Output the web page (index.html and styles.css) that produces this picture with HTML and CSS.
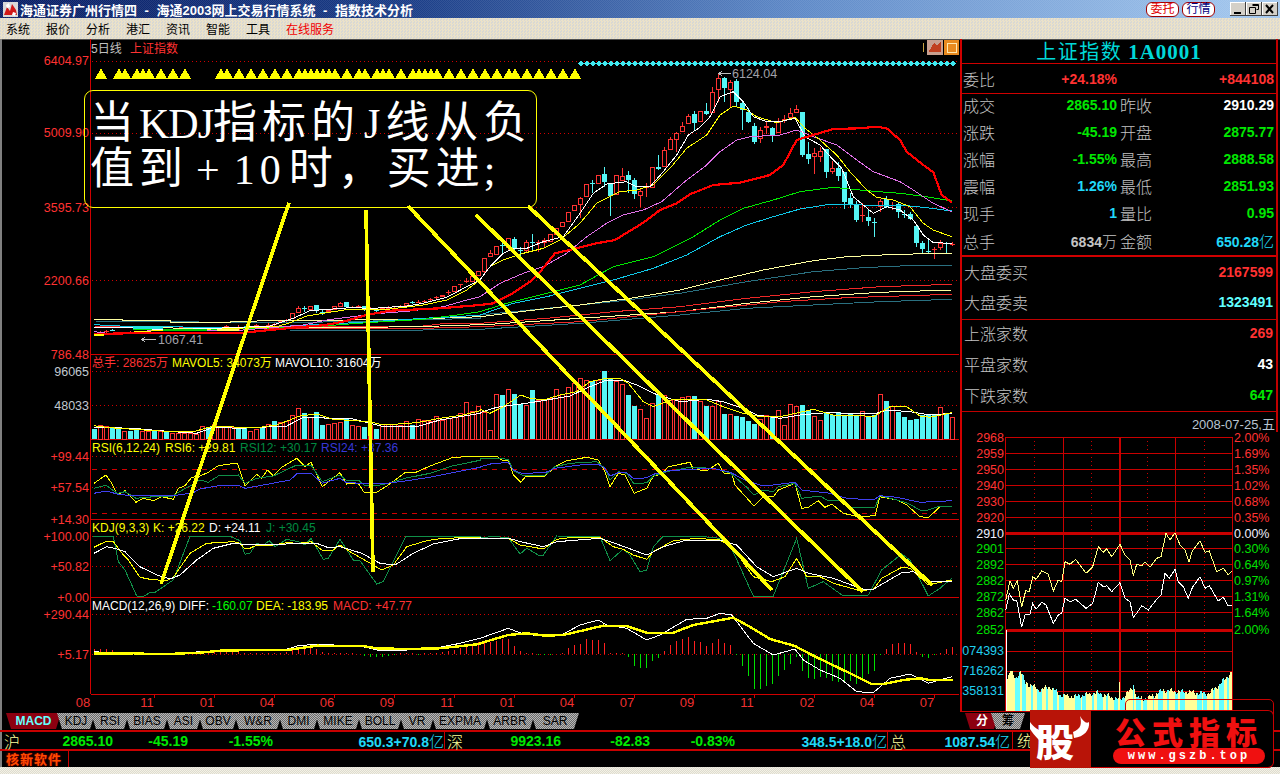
FILE: index.html
```html
<!DOCTYPE html>
<html lang="zh-CN">
<head>
    <meta charset="UTF-8">
    <meta name="viewport" content="width=device-width, initial-scale=1.0">
    <title>海通2003网上交易行情系统 - 指数技术分析</title>
    <link rel="stylesheet" href="styles.css">
</head>
<body>
<div class="window">
    <div class="titlebar">
        <svg class="app-icon" width="15" height="15" viewBox="0 0 15 15">
            <rect width="15" height="15" fill="#d8d8d8"/>
            <path d="M1 13 L4 5 L7 9 L9 2 L13 8 L14 13Z" fill="#d01818"/>
            <path d="M3 3 L6 1 L7 5 L4 6Z M10 10 L13 11 L12 14 L9 13Z" fill="#fff"/>
        </svg>
        <span class="app-title">海通证券广州行情四 - 海通2003网上交易行情系统 - 指数技术分析</span>
        <span class="pill pill-red">委托</span>
        <span class="pill pill-blue">行情</span>
        <div class="caption-btns">
            <span class="caption-btn"><svg width="16" height="14" viewBox="0 0 16 14"><rect x="4" y="10" width="7" height="2" fill="#000"/></svg></span>
            <span class="caption-btn"><svg width="16" height="14" viewBox="0 0 16 14"><path d="M6.5 2.5h6v5h-2M3.5 5.5h6v6h-6z M6.5 3.5h6" fill="none" stroke="#000"/></svg></span>
            <span class="caption-btn"><svg width="16" height="14" viewBox="0 0 16 14"><path d="M4 3l7 8M11 3l-7 8" stroke="#000" stroke-width="2"/></svg></span>
        </div>
    </div>

    <div class="menubar">
        <span>系统</span><span>报价</span><span>分析</span><span>港汇</span><span>资讯</span><span>智能</span><span>工具</span><span class="menu-red">在线服务</span>
    </div>

    <div class="workspace">
        <div class="chart-col">
            <svg class="chart" width="960" height="673" viewBox="0 39 960 673">
                <g id="grid" class="grid">
                    <path class="dot" d="M92 61.5H958M92 133.5H958M92 207.5H958M92 280.5H958"/>
                    <path class="dot" d="M92 371.5H958M92 405.5H958"/>
                    <path class="dot" d="M92 456.5H958M92 487.5H958"/>
                    <path class="dash" d="M92 469.5H958M92 513.5H958"/>
                    <path class="dot" d="M92 536.5H958M92 566.5H958"/>
                    <path class="dot" d="M92 614.5H958M92 654.5H958"/>
                    <path class="solid" d="M90.5 39V694M90.5 354.5H959M90.5 439.5H959M90.5 519.5H959M90.5 597.5H959M90.5 694.5H959"/>
                    <path class="solid" d="M154.5 694V698M214.5 694V698M274.5 694V698M334.5 694V698M394.5 694V698M454.5 694V698M514.5 694V698M574.5 694V698M634.5 694V698M694.5 694V698M754.5 694V698M814.5 694V698M874.5 694V698M934.5 694V698"/>
                </g>
                <g id="signals"></g>
                <g id="candles"></g>
                <g id="volumes"></g>
                <g id="hist"></g>
                <g id="lines"></g>

                <g class="axis">
                    <text x="89" y="65">6404.97</text>
                    <text x="89" y="137">5009.90</text>
                    <text x="89" y="212">3595.73</text>
                    <text x="89" y="285">2200.66</text>
                    <text x="89" y="359">786.48</text>
                    <text x="89" y="376" class="ax-grey">96065</text>
                    <text x="89" y="410" class="ax-grey">48033</text>
                    <text x="89" y="461">+99.44</text>
                    <text x="89" y="492">+57.54</text>
                    <text x="89" y="524">+14.30</text>
                    <text x="89" y="541">+100.00</text>
                    <text x="89" y="571">+50.82</text>
                    <text x="89" y="602">+0.00</text>
                    <text x="89" y="619">+290.44</text>
                    <text x="89" y="659">+5.17</text>
                </g>
                <g class="months">
                    <text x="83" y="707">08</text><text x="147" y="707">11</text><text x="207" y="707">01</text>
                    <text x="267" y="707">04</text><text x="327" y="707">06</text><text x="387" y="707">09</text>
                    <text x="447" y="707">11</text><text x="507" y="707">01</text><text x="567" y="707">04</text>
                    <text x="627" y="707">07</text><text x="687" y="707">09</text><text x="747" y="707">11</text>
                    <text x="807" y="707">02</text><text x="867" y="707">04</text><text x="927" y="707">07</text>
                </g>

                <g class="legend">
                    <text x="91" y="53" class="c-grey">5日线</text>
                    <text x="130" y="53" class="c-red">上证指数</text>
                    <text x="92" y="367" class="c-red">总手: 28625万</text>
                    <text x="172" y="367" class="c-yellow">MAVOL5: 34073万</text>
                    <text x="275" y="367" class="c-white">MAVOL10: 31604万</text>
                    <text x="92" y="452" class="c-yellow">RSI(6,12,24)</text>
                    <text x="165" y="452" class="c-yellow">RSI6: +29.81</text>
                    <text x="240" y="452" class="c-dgreen">RSI12: +30.17</text>
                    <text x="321" y="452" class="c-blue">RSI24: +37.36</text>
                    <text x="92" y="532" class="c-yellow">KDJ(9,3,3)</text>
                    <text x="153" y="532" class="c-yellow">K: +26.22</text>
                    <text x="209" y="532" class="c-white">D: +24.11</text>
                    <text x="266" y="532" class="c-dgreen">J: +30.45</text>
                    <text x="92" y="610" class="c-white">MACD(12,26,9)</text>
                    <text x="179" y="610" class="c-white">DIFF:</text>
                    <text x="212" y="610" class="c-green">-160.07</text>
                    <text x="256" y="610" class="c-yellow">DEA: -183.95</text>
                    <text x="333" y="610" class="c-red">MACD: +47.77</text>
                    <text x="732" y="78" class="c-grey2 big">6124.04</text>
                    <text x="158" y="344" class="c-grey2 big">1067.41</text>
                </g>
                <path class="arrow" d="M731 73.5H719M722 71l-3 2.500 3 2.500M156 339.5H142M145 337l-3 2.500 3 2.500"/>

                <g class="pen">
                    <line x1="289" y1="203" x2="161" y2="584"/>
                    <line x1="366" y1="210" x2="373" y2="572"/>
                    <line x1="408" y1="206" x2="772" y2="590"/>
                    <line x1="476" y1="215" x2="863" y2="592"/>
                    <line x1="528" y1="206" x2="932" y2="585"/>
                </g>

                <rect x="923" y="43" width="1" height="9" fill="#c8a040"/>
                <rect x="927" y="40" width="16" height="15" fill="#c8a090"/>
                <path d="M929 51l5-8 3 3 4-5v11h-12z" fill="#c04020"/>
                <rect x="944" y="40" width="15" height="15" fill="#e88a20"/>
                <rect x="947" y="43" width="9" height="9" fill="#e88a20" stroke="#ffe8b0"/>
            </svg>

            <div class="note">
                <div class="note-line">当<span class="hw">KDJ</span>指标的<span class="hw hw-j">J</span>线从负</div>
                <div class="note-line">值到<span class="hw hw-plus">+</span><span class="hw hw-num">10</span>时，买进<span class="hw hw-semi">;</span></div>
            </div>
        </div>

        <aside class="side">
            <div class="side-inner">
                <div class="quote-title"><span>上证指数</span> <b>1A0001</b></div>
                <div class="q-row q-first">
                    <span class="lbl">委比</span><span class="num up">+24.18%</span><span></span><span class="num up">+844108</span>
                </div>
                <div class="q-block">
                    <div class="q-row"><span class="lbl">成交</span><span class="num down">2865.10</span><span class="lbl lbl2">昨收</span><span class="num white">2910.29</span></div>
                    <div class="q-row"><span class="lbl">涨跌</span><span class="num down">-45.19</span><span class="lbl lbl2">开盘</span><span class="num down">2875.77</span></div>
                    <div class="q-row"><span class="lbl">涨幅</span><span class="num down">-1.55%</span><span class="lbl lbl2">最高</span><span class="num down">2888.58</span></div>
                    <div class="q-row"><span class="lbl">震幅</span><span class="num cyan">1.26%</span><span class="lbl lbl2">最低</span><span class="num down">2851.93</span></div>
                    <div class="q-row"><span class="lbl">现手</span><span class="num cyan">1</span><span class="lbl lbl2">量比</span><span class="num down">0.95</span></div>
                    <div class="q-row"><span class="lbl">总手</span><span class="num grey">6834<i>万</i></span><span class="lbl lbl2">金额</span><span class="num cyan">650.28<i>亿</i></span></div>
                </div>
                <div class="m-block m-orders">
                    <div class="m-row"><span class="lbl">大盘委买</span><span class="num up">2167599</span></div>
                    <div class="m-row"><span class="lbl">大盘委卖</span><span class="num cyan2">1323491</span></div>
                </div>
                <div class="m-block m-counts">
                    <div class="m-row"><span class="lbl">上涨家数</span><span class="num up">269</span></div>
                    <div class="m-row"><span class="lbl">平盘家数</span><span class="num white">43</span></div>
                    <div class="m-row"><span class="lbl">下跌家数</span><span class="num down">647</span></div>
                </div>
                <div class="date-row">2008-07-25,五</div>
            </div>
            <svg class="mini" width="318" height="280" viewBox="962 432 318 280">
                <g id="mini-grid"></g>
                <g id="mini-bars"></g>
                <g id="mini-lines"></g>
                <g class="axis">
                    <text x="1004" y="442">2968</text><text x="1004" y="458">2959</text><text x="1004" y="474">2950</text>
                    <text x="1004" y="490">2940</text><text x="1004" y="506">2930</text><text x="1004" y="522">2920</text>
                    <text x="1004" y="538" class="ax-white">2910</text>
                    <text x="1004" y="553" class="ax-green">2901</text><text x="1004" y="569" class="ax-green">2892</text><text x="1004" y="585" class="ax-green">2882</text>
                    <text x="1004" y="601" class="ax-green">2872</text><text x="1004" y="617" class="ax-green">2862</text><text x="1004" y="634" class="ax-green">2852</text>
                    <text x="1004" y="655" class="ax-cyan">074393</text><text x="1004" y="675" class="ax-cyan">716262</text><text x="1004" y="695" class="ax-cyan">358131</text>
                </g>
                <g class="axis axis-r">
                    <text x="1234" y="442">2.00%</text><text x="1234" y="458">1.69%</text><text x="1234" y="474">1.35%</text>
                    <text x="1234" y="490">1.02%</text><text x="1234" y="506">0.68%</text><text x="1234" y="522">0.35%</text>
                    <text x="1234" y="538" class="ax-white">0.00%</text>
                    <text x="1234" y="553" class="ax-green">0.30%</text><text x="1234" y="569" class="ax-green">0.64%</text><text x="1234" y="585" class="ax-green">0.97%</text>
                    <text x="1234" y="601" class="ax-green">1.31%</text><text x="1234" y="617" class="ax-green">1.64%</text><text x="1234" y="634" class="ax-green">2.00%</text>
                </g>
            </svg>
        </aside>
    </div>

    <div class="tabs">
        <span class="tab tab-on w55">MACD</span>
        <span class="tab w38">KDJ</span>
        <span class="tab w38">RSI</span>
        <span class="tab w44">BIAS</span>
        <span class="tab w37">ASI</span>
        <span class="tab w40">OBV</span>
        <span class="tab w48">W&amp;R</span>
        <span class="tab w41">DMI</span>
        <span class="tab w46">MIKE</span>
        <span class="tab w46">BOLL</span>
        <span class="tab w36">VR</span>
        <span class="tab w58">EXPMA</span>
        <span class="tab w50">ARBR</span>
        <span class="tab w48">SAR</span>
        <span class="side-tabs">
            <span class="tab tab-on2 w34">分</span>
            <span class="tab tab-off2 w34">筹</span>
        </span>
    </div>

    <div class="status">
        <div class="st-group st-a">
            <span class="st-lbl">沪</span><span class="st-num down">2865.10</span><span class="st-num down">-45.19</span><span class="st-num down">-1.55%</span><span class="st-num cyan">650.3+70.8<i>亿</i></span>
        </div>
        <div class="st-group st-b">
            <span class="st-lbl">深</span><span class="st-num down">9923.16</span><span class="st-num down">-82.83</span><span class="st-num down">-0.83%</span><span class="st-num cyan">348.5+18.0<i>亿</i></span>
        </div>
        <div class="st-group st-c">
            <span class="st-lbl">总</span><span class="st-num cyan">1087.54<i>亿</i></span>
        </div>
        <div class="st-group st-d"><span class="st-lbl">统</span></div>
    </div>

    <div class="footer"><span class="core-soft">核新软件</span></div>
    <div class="win-edge"></div>

    <div class="logo-back"></div>
    <div class="logo">
        <div class="logo-bull">
            <svg class="horns" width="61" height="58" viewBox="0 0 61 58">
                <path d="M0 12C4 18 9 20 13 22L9 30C5 26 2 22 0 19Z" fill="#fff"/>
                <path d="M50 6C52 14 51 19 43 22L44 28C54 27 60 20 59 12C56 14 53 11 50 6Z" fill="#fff"/>
            </svg>
            <span class="bull-char">股</span>
        </div>
        <div class="logo-body">
            <div class="logo-name">公式指标</div>
            <div class="logo-url">www.gszb.top</div>
        </div>
    </div>
</div>
<script src="chart.js"></script>
</body>
</html>
```

FILE: styles.css
```css
* {
    box-sizing: border-box;
}

html, body {
    margin: 0;
    padding: 0;
    background: #000;
}

body {
    font-family: "Liberation Sans", "Noto Sans CJK SC", sans-serif;
}

i {
    font-style: normal;
}

.window {
    position: relative;
    width: 1280px;
    height: 774px;
    overflow: hidden;
    background: #000;
}

/* title + menu */
.titlebar {
    display: flex;
    align-items: center;
    height: 18px;
    padding-left: 3px;
    color: #fff;
    background:
        repeating-conic-gradient(rgba(255, 255, 255, 0.08) 0 25%, transparent 0 50%) 0 0 / 2px 2px,
        linear-gradient(90deg, #0a1f66 0, #1a3c86 400px, #5f8ac8 800px, #a6caf0 1280px);
}

.app-icon {
    flex: none;
}

.app-title {
    margin-left: 2px;
    flex: 1;
    font-size: 13px;
    font-weight: 700;
    white-space: pre;
    word-spacing: 4px;
}

.pill {
    width: 33px;
    height: 15px;
    margin-right: 3px;
    border: 1px solid #a00000;
    border-radius: 6px;
    background: #fff;
    font-size: 12px;
    line-height: 13px;
    text-align: center;
}

.pill-red {
    color: #e00000;
}

.pill-blue {
    color: #000080;
}

.caption-btns {
    display: flex;
    margin-left: 12px;
    margin-right: 2px;
}

.caption-btn {
    display: block;
    width: 16px;
    height: 14px;
    background: #d4d0c8;
    box-shadow: inset -1px -1px #404040, inset 1px 1px #fff;
}

.menubar {
    display: flex;
    align-items: center;
    gap: 16px;
    height: 21px;
    padding-left: 6px;
    font-size: 12px;
    color: #000;
    background: repeating-conic-gradient(#ece2c8 0 25%, #d8d8d4 0 50%) 0 0 / 3px 3px;
}

.menu-red {
    color: #f00000;
}

/* main area */
.workspace {
    display: flex;
    height: 673px;
    background: #000;
    box-shadow: inset 2px 0 #808080, inset 0 1px #505050;
}

.chart-col {
    position: relative;
    width: 960px;
    flex: none;
}

.chart {
    display: block;
    shape-rendering: crispEdges;
}

.grid path {
    fill: none;
    stroke: #d00000;
}

.grid .dot {
    stroke-dasharray: 1 3;
}

.grid .dash {
    stroke-dasharray: 5 5;
}

.axis text {
    font-family: "Liberation Sans", sans-serif;
    font-size: 12.5px;
    fill: #ff3232;
    text-anchor: end;
}

.axis-r text {
    text-anchor: start;
}

.axis .ax-grey {
    fill: #c0c8d0;
}

.axis .ax-white {
    fill: #f0f0ff;
}

.axis .ax-green {
    fill: #00e000;
}

.axis .ax-cyan {
    fill: #20d0f0;
}

.months text {
    font-family: "Liberation Sans", sans-serif;
    font-size: 13px;
    fill: #f03030;
    text-anchor: middle;
}

.legend text {
    font-family: "Liberation Sans", "Noto Sans CJK SC", sans-serif;
    font-size: 12px;
}

.legend .big {
    font-size: 12.5px;
}

.c-grey { fill: #c0c0c0; }
.c-grey2 { fill: #a0a0a8; }
.c-red { fill: #ff3232; }
.c-yellow { fill: #ffff00; }
.c-white { fill: #fff; }
.c-green { fill: #00ff00; }
.c-dgreen { fill: #008a40; }
.c-blue { fill: #3838d8; }

.arrow {
    fill: none;
    stroke: #c0c0c0;
}

.pen line {
    stroke: #ffff00;
    stroke-width: 3.7;
}

/* chart lines */
.ln { fill: none; stroke-width: 1; }
.ln-white { stroke: #fff; }
.ln-yellow { stroke: #ffff00; }
.ln-pink { stroke: #e070e8; }
.ln-red { stroke: #ff0000; stroke-width: 2.2; }
.ln-green { stroke: #00e800; }
.ln-cyan { stroke: #10c8e8; }
.ln-cream { stroke: #ffffa0; }
.ln-teal { stroke: #2a7080; }
.ln-thinred { stroke: #f02828; }
.ln-dgreen { stroke: #109048; }
.ln-blue { stroke: #4040f0; }
.ln-fat { stroke: #ffff00; stroke-width: 2.4; }
.ln-pale { stroke: #ffff80; }

.bar-up { fill: #000; stroke: #ff3232; }
.bar-down { fill: #55f5f5; }
.wick-up { stroke: #ff3232; }
.wick-down { stroke: #55f5f5; }

/* annotation box */
.note {
    position: absolute;
    left: 84px;
    top: 51px;
    width: 453px;
    height: 118px;
    padding: 5px 0 0 5px;
    border: 1px solid #ffff00;
    border-radius: 9px;
    color: #fff;
    font-family: "Noto Sans CJK SC", sans-serif;
    font-size: 44px;
    line-height: 46px;
    letter-spacing: 5px;
    white-space: nowrap;
}

.note-line {
    height: 46px;
}

.hw {
    font-family: "Liberation Serif", serif;
    font-size: 42px;
    letter-spacing: -1px;
}

.hw-j {
    margin: 0 6px 0 4px;
}

.hw-plus {
    margin: 0 15px 0 8px;
}

.hw-num {
    margin-right: 3px;
    letter-spacing: 5px;
}

.hw-semi {
    margin-left: -1px;
}

/* right side panel */
.side {
    width: 320px;
    flex: none;
    border-left: 2px solid #d00000;
    box-shadow: inset 0 1px #505050;
}

.side-inner {
    width: 316px;
    border-right: 2px solid #c00000;
}

.mini {
    display: block;
    shape-rendering: crispEdges;
}

.quote-title {
    height: 25px;
    border-bottom: 1px solid #d00000;
    color: #00d8d8;
    font-family: "Noto Sans CJK SC", sans-serif;
    font-size: 20px;
    line-height: 24px;
    letter-spacing: 1.500px;
    text-align: center;
    white-space: nowrap;
}

.quote-title b {
    font-family: "Liberation Serif", serif;
    font-size: 21px;
    letter-spacing: 1px;
}

.q-row {
    display: grid;
    grid-template-columns: 40px 114px 39px 118px;
    align-items: center;
    height: 27.2px;
    padding-left: 1px;
}

.q-first {
    height: 30px;
    border-bottom: 1px solid #d00000;
}

.q-block {
    display: flow-root;
    height: 163px;
    border-bottom: 2px solid #d00000;
}

.q-block .q-row:first-child {
    margin-top: -3px;
}

.lbl {
    color: #c4c4c4;
    font-family: "Noto Sans CJK SC", sans-serif;
    font-size: 16px;
    font-weight: 300;
    line-height: 20px;
    white-space: nowrap;
}

.lbl2 {
    padding-left: 3px;
}

.num {
    font-size: 14px;
    font-weight: 700;
    text-align: right;
    white-space: nowrap;
}

.num i, .st-num i {
    font-family: "Noto Sans CJK SC", sans-serif;
    font-weight: 300;
    font-size: 15px;
}

.up { color: #ff3232; }
.down { color: #00e800; }
.white { color: #fff; }
.cyan { color: #20d8f8; }
.cyan2 { color: #60ffff; }
.grey { color: #c4c4c4; }

.m-block {
    display: flow-root;
    padding: 0 3px 0 2px;
    border-bottom: 1px solid #c00000;
}

.m-orders {
    height: 63px;
}

.m-counts {
    height: 92px;
}

.m-row {
    display: flex;
    justify-content: space-between;
    align-items: center;
    height: 30px;
}

.m-counts .m-row {
    height: 31px;
}

.m-counts .m-row:first-child {
    margin-top: -3px;
}

.date-row {
    height: 20px;
    padding-right: 1px;
    color: #b8c4d0;
    font-size: 13px;
    line-height: 26px;
    text-align: right;
}

/* bottom rows */
.tabs {
    display: flex;
    height: 18px;
    padding: 1px 0 1px 6px;
    box-shadow: inset 2px 0 #808080;
}

.tab {
    display: block;
    margin-right: -4px;
    clip-path: polygon(0 0, 100% 0, calc(100% - 5px) 100%, 5px 100%);
    background: repeating-conic-gradient(#6c6c6c 0 25%, #b8b8b8 0 50%) 0 0 / 2px 2px;
    color: #000;
    font-size: 12px;
    line-height: 16px;
    text-align: center;
}

.tab-on {
    background: #8c0010;
    color: #66ffff;
    font-weight: 700;
}

.tab-on2 {
    background: #8c0010;
    color: #fff;
    font-weight: 700;
}

.tab-off2 {
    font-weight: 700;
}

.w34 { width: 34px; }
.w36 { width: 36px; }
.w37 { width: 37px; }
.w38 { width: 38px; }
.w40 { width: 40px; }
.w41 { width: 41px; }
.w44 { width: 44px; }
.w46 { width: 46px; }
.w48 { width: 48px; }
.w50 { width: 50px; }
.w55 { width: 55px; }
.w58 { width: 58px; }

.side-tabs {
    display: flex;
    position: absolute;
    left: 965px;
}

.side-tabs .tab {
    margin-right: -8px;
}

.status {
    display: flex;
    height: 21px;
    border-top: 2px solid #c80000;
    border-bottom: 2px solid #c80000;
    box-shadow: inset 2px 0 #808080;
}

.st-group {
    display: grid;
    align-items: center;
    flex: none;
    border-right: 1px solid #c80000;
}

.st-a {
    width: 443px;
    margin-left: 2px;
    grid-template-columns: 18px 93px 75px 85px 171px;
}

.st-b {
    width: 443px;
    grid-template-columns: 20px 96px 89px 85px 152px;
}

.st-c {
    width: 125px;
    grid-template-columns: 20px 102px;
}

.st-d {
    width: 60px;
    border-right: 0;
    padding-left: 2px;
}

.st-lbl {
    padding-left: 2px;
    color: #ffff99;
    font-family: "Noto Sans CJK SC", sans-serif;
    font-size: 16px;
    font-weight: 300;
    line-height: 17px;
}

.st-num {
    font-size: 14px;
    font-weight: 700;
    line-height: 17px;
    text-align: right;
    white-space: nowrap;
}

.footer {
    height: 16px;
    padding-left: 6px;
    box-shadow: inset 2px 0 #808080;
}

.core-soft {
    display: block;
    width: 63px;
    height: 16px;
    border-right: 1px solid #c80000;
    color: #ff4a00;
    font-family: "Noto Sans CJK SC", sans-serif;
    font-size: 13px;
    font-weight: 700;
    line-height: 15px;
    letter-spacing: 1px;
    text-shadow: 0 0 2px #c00000;
}

.win-edge {
    height: 7px;
    background: repeating-conic-gradient(#f4f0e4 0 25%, #dcdcd0 0 50%) 0 0 / 2px 2px;
}

/* logo stamped over the corner */
.logo-back {
    position: absolute;
    left: 1125px;
    top: 699px;
    width: 149px;
    height: 20px;
    border: 1px solid #c80000;
    border-radius: 5px;
}

.logo {
    position: absolute;
    left: 1030px;
    top: 710px;
    display: flex;
    width: 244px;
    height: 58px;
}

.logo-bull {
    position: relative;
    width: 61px;
    flex: none;
    background: #b81408;
}

.horns {
    position: absolute;
    left: 0;
    top: 0;
}

.bull-char {
    position: absolute;
    left: 6px;
    top: 1px;
    color: #fff;
    font-family: "Noto Sans CJK SC", sans-serif;
    font-size: 38px;
    font-weight: 900;
    line-height: 58px;
}

.logo-body {
    flex: 1;
    padding-top: 3px;
    border: 1px solid #c80000;
    border-left: 0;
    border-radius: 0 6px 6px 0;
    background: #000;
}

.logo-name {
    height: 34px;
    padding-left: 24px;
    color: #f01010;
    font-family: "Noto Sans CJK SC", sans-serif;
    font-size: 31px;
    font-weight: 900;
    line-height: 34px;
    letter-spacing: 6px;
    white-space: nowrap;
}

.logo-url {
    width: 152px;
    height: 16px;
    margin-left: 22px;
    border-radius: 8px;
    background: #f01010;
    color: #fff;
    font-family: "Liberation Mono", monospace;
    font-size: 12px;
    font-weight: 700;
    line-height: 16px;
    letter-spacing: 3px;
    text-align: center;
}
```

FILE: chart.js
```javascript
// all series below were read off a 3x blow-up, so x/y are 3x offsets from a panel origin
const NS = 'http://www.w3.org/2000/svg';

function add(parent, tag, attrs) {
    const el = document.createElementNS(NS, tag);
    for (const k in attrs) el.setAttribute(k, attrs[k]);
    parent.appendChild(el);
    return el;
}

function at(ox, oy, s) {
    return s.trim().split(/\s+/).map(p => {
        const [x, y] = p.split(',');
        return (ox + x / 3).toFixed(1) + ',' + (oy + y / 3).toFixed(1);
    }).join(' ');
}

const barX = i => 92 + 6 * i;
const lines = document.getElementById('lines');
const draw = (cls, pts) => add(lines, 'polyline', { class: 'ln ln-' + cls, points: pts });

// signal rows over the main chart
const signals = document.getElementById('signals');
const ups = [101, 119, 125, 137, 143, 149, 161, 173, 185, 221, 227, 239, 251, 263, 275, 287, 299, 305, 311, 317, 323, 329, 335,
    347, 359, 365, 377, 383, 389, 401, 413, 419, 425, 431, 437, 449, 461, 473, 485, 497, 509, 515, 527, 539, 551, 563, 575];
ups.forEach(x => add(signals, 'polygon', { points: `${x - 6},79 ${x + 6},79 ${x},68`, fill: '#ffff00' }));
for (let i = 0; i < 63; i++) {
    const x = 581 + 6 * i;
    add(signals, 'polygon', { points: `${x - 3},63.500 ${x},60.500 ${x + 3},63.500 ${x},66.500`, fill: '#40e8f0' });
}

// candles: colour, body top, body bottom, high, low
const earlyCandles = `
1 r 275 275 272 278
2 r 274 274 270 278
3 c 270 270 268 274
6 r 276 276 272 280
22 r 258 258 255 262
24 r 260 260 256 264
27 r 256 256 252 260
29 r 255 255 250 260
30 r 252 252 248 258
31 r 243 243 240 248
32 r 240 240 236 246
33 r 218 238 218 238
34 r 205 218 198 218
35 c 205 205 198 215
36 r 198 210 198 210
37 c 195 210 195 218
38 c 215 215 208 225
39 r 210 215 208 218
40 r 198 210 198 210
41 r 188 200 185 200
42 c 186 202 186 202
43 r 200 200 197 204
44 r 198 198 195 202
45 c 198 210 198 212
46 r 205 205 202 208
47 c 210 210 206 216
48 r 205 205 202 208
49 r 203 203 199 206
50 r 203 203 199 206
51 r 198 198 194 202
52 r 190 198 190 198
53 c 187 187 184 191
54 r 185 185 181 189
55 r 183 183 179 187
56 r 178 178 174 182
57 r 172 172 168 176
58 r 165 172 165 172
59 r 157 157 150 164
60 r 138 155 138 155
61 r 133 133 133 145
62 r 122 122 115 130
63 r 108 125 108 125
64 r 92 108 92 108`;

const lateCandles = `
r 655 695 655 705
r 640 652 630 652
r 618 645 618 645
c 616 616 605 645
r 595 625 595 630
c 597 625 590 645
c 630 630 620 662
r 605 632 600 640
c 605 605 583 635
r 605 605 600 635
r 600 608 595 625
r 583 607 583 607
r 565 585 565 585
r 545 562 545 562
r 515 545 515 545
r 495 512 495 512
r 475 495 470 535
r 433 472 433 472
c 429 429 420 458
r 405 432 405 432
c 403 427 380 440
c 432 467 430 528
r 405 465 405 465
r 408 423 385 423
c 405 420 393 460
c 420 462 415 476
r 453 467 447 502
r 440 440 430 470
r 382 445 382 445
c 380 387 345 390
r 330 380 322 380
r 297 330 290 330
r 280 300 275 335
r 258 275 245 275
r 229 252 222 252
c 222 248 212 270
r 213 247 213 247
c 213 222 190 225
r 157 220 142 220
r 115 150 100 185
c 115 145 110 185
r 127 150 120 200
c 122 185 117 200
c 190 210 183 270
c 217 245 205 250
c 258 305 250 312
r 270 297 262 308
r 258 265 245 282
c 263 285 260 305
r 245 280 235 280
r 237 237 225 250
r 218 235 205 235
r 208 218 195 218
c 215 345 215 350
c 343 358 305 372
r 340 352 325 402
r 332 350 320 365
c 328 395 328 415
r 383 395 362 402
c 385 408 365 422
c 395 487 395 508
c 475 492 458 505
c 492 540 483 545
r 525 525 490 545
c 532 543 510 557
c 547 547 535 590
r 482 500 478 517
c 478 500 468 505
r 495 495 485 510
c 493 515 490 533
c 522 522 510 535
c 522 537 515 540
c 558 608 558 620
c 610 628 603 640
c 632 632 600 640
r 627 627 622 657
r 608 625 600 630
c 610 610 605 642
r 612 612 605 618`;

const candles = document.getElementById('candles');

function candle(i, c, top, bot, hi, lo) {
    const x = barX(i);
    const cls = c === 'r' ? 'up' : 'down';
    add(candles, 'line', { class: 'wick-' + cls, x1: x + 2.5, x2: x + 2.5, y1: hi, y2: lo });
    if (bot - top < 1.5) {
        add(candles, 'line', { class: 'wick-' + cls, x1: x, x2: x + 5, y1: top + 0.5, y2: top + 0.5 });
    } else if (c === 'r') {
        add(candles, 'rect', { class: 'bar-up', x: x + 0.5, y: top + 0.5, width: 4, height: bot - top - 1 });
    } else {
        add(candles, 'rect', { class: 'bar-down', x: x, y: top, width: 5, height: bot - top });
    }
}

earlyCandles.trim().split('\n').forEach(row => {
    const [i, c, a, b, h, l] = row.trim().split(' ');
    candle(+i, c, 240 + a / 3, 240 + b / 3, 240 + h / 3, 240 + l / 3);
});
lateCandles.trim().split('\n').forEach((row, k) => {
    const [c, a, b, h, l] = row.trim().split(' ');
    candle(65 + k, c, 40 + a / 3, 40 + b / 3, 40 + h / 3, 40 + l / 3);
});

// moving averages on the main chart: left part, then right part
const main = (l, r) => at(90, 240, l) + ' ' + at(480, 40, r);

draw('teal', main('12,243 420,247 700,246 850,243 1170,235', '0,825 200,805 400,785 600,760 800,725 1000,695 1150,683 1280,677 1415,677'));
draw('cream', main('12,238 96,238 96,242 240,242 240,246 420,246 420,244 960,238 1170,230', '0,830 120,815 300,795 450,775 600,750 720,720 850,690 1000,662 1100,650 1250,643 1415,640'));
draw('thinred', main('12,258 340,262 1000,258 1050,252 1170,250', '0,850 200,835 400,815 600,800 800,775 1000,755 1200,740 1415,733'));
draw('cream', main('12,262 350,265 850,262 1050,258 1170,254', '0,855 300,835 600,815 800,790 1000,770 1200,757 1415,750'));
draw('thinred', main('220,268 1000,265 1170,260', '0,860 300,845 500,825 700,805 900,785 1100,773 1415,763'));
draw('teal', main('600,273 1000,270 1170,268', '0,868 300,850 600,825 800,805 1000,795 1200,785 1415,778'));
draw('cyan', main('12,254 130,260 420,262 600,258 850,245 1000,235 1100,230 1170,225', '0,825 100,790 200,770 300,745 400,720 520,685 620,645 720,590 800,555 880,530 960,507 1050,493 1150,495 1280,497 1340,503 1415,513'));
draw('green', main('130,270 420,268 600,262 700,258 830,248 1000,238 1100,225 1170,215', '0,815 80,790 200,760 300,735 400,680 520,650 640,590 720,540 790,505 880,480 960,455 1060,442 1160,452 1260,460 1340,470 1415,483'));
draw('pink', main('12,275 80,283 200,270 460,270 640,255 710,240 850,222 960,213 1060,200 1130,180 1170,170', '0,770 60,730 130,700 190,680 260,640 320,590 380,550 430,525 490,510 545,485 620,420 680,375 720,335 770,300 810,290 900,285 950,270 1000,290 1070,315 1130,360 1180,395 1260,425 1300,450 1360,490 1415,515'));
draw('yellow', main('12,283 200,272 460,264 560,260 600,248 650,228 780,207 900,207 1000,195 1070,180 1130,150 1170,120', '0,720 30,680 70,660 130,640 190,625 240,600 300,550 350,490 420,455 470,450 520,435 570,385 620,325 680,285 720,225 760,198 800,210 830,230 890,248 945,232 975,265 1020,300 1070,345 1110,395 1160,450 1190,472 1240,480 1290,500 1330,550 1360,570 1415,590'));
draw('white', main('12,262 130,262 220,270 460,262 540,258 610,235 660,212 780,203 850,205 950,198 1000,190 1070,172 1130,140 1170,120', '0,720 30,680 70,640 100,625 140,625 190,605 250,590 300,520 340,460 380,432 440,425 470,440 510,440 550,395 590,345 625,285 660,262 690,230 720,170 760,155 790,185 820,230 860,245 900,245 945,235 975,290 1020,315 1060,360 1085,385 1120,470 1150,495 1180,520 1220,500 1260,510 1300,540 1330,585 1360,608 1415,610'));
draw('red', main('12,282 200,278 340,280 460,278 620,262 700,256 760,245 830,225 900,212 1050,205 1170,195', '0,795 40,790 90,765 150,725 185,690 225,640 290,625 350,610 405,600 490,548 540,510 590,490 630,463 700,435 780,428 870,405 910,375 950,300 1000,285 1060,267 1140,265 1190,260 1220,265 1260,300 1280,335 1330,375 1360,397 1385,465 1415,487'));

// thick colour stretches in the flat part of the chart
[['#20e0e0', 133, 326, 30, 3], ['#00d000', 163, 329, 44, 2], ['#ffff60', 217, 329, 22, 2], ['#ffff00', 94, 334, 10, 2]].forEach(b => {
    add(lines, 'rect', { x: b[1], y: b[2], width: b[3], height: b[4], fill: b[0] });
});

// volume: height in px + r/c
const vols = `10c 14r 13r 11c 10c 8r 8c 9c 8r 8r 8c 8r 8c 6r 6r 6r 6r 5r 13r 12c 15r 13r 12r 12r 12c 11c 8r 10r 12c 15r
18c 17r 18r 24r 31r 26c 22r 27c 14c 15r 16r 17r 20c 14r 13r 12c 14r 10c 15r 15r 15r 14r 18r 14c 20r 19r 18r 23r 19r 21r
22r 26r 37r 28r 33r 27r 9r 45r 44c 50r 45c 35c 34r 49c 39r 39r 41r 50r 45r 52r 56r 61r 59r 58c 59r 68c 61c 58r 55r 44c
33c 30r 21r 36r 44c 44r 39r 39r 42r 43r 43c 38r 33c 33r 38r 25c 25r 23c 22c 18c 15c 20r 24r 23c 29r 14r 35r 33r 34c 29c
23r 19r 26c 24c 27c 23c 25c 24c 28r 22c 24c 45r 38c 33r 27c 22c 19c 20c 24c 24c 24c 32r 26c 22r`;
const volumes = document.getElementById('volumes');
vols.trim().split(/\s+/).forEach((v, i) => {
    const h = parseInt(v);
    const x = barX(i);
    if (v.endsWith('r')) {
        add(volumes, 'rect', { class: 'bar-up', x: x + 0.5, y: 439.5 - h, width: 4, height: h });
    } else {
        add(volumes, 'rect', { class: 'bar-down', x: x, y: 439 - h, width: 5, height: h });
    }
});

const vol = (l, r) => at(0, 340, l) + ' ' + at(480, 350, r);
draw('white', vol('282,262 400,265 480,272 590,280 640,262 720,265 780,262 860,258 910,232 1000,235 1050,235 1110,250 1150,260 1250,260 1320,240 1440,220', '0,188 50,172 100,165 140,160 200,150 270,138 330,110 380,90 430,90 470,105 520,130 600,155 680,148 730,155 790,175 830,195 900,205 960,195 1040,188 1120,190 1190,190 1220,180 1290,185 1350,195 1415,190'));
draw('yellow', vol('282,257 330,263 400,268 480,273 585,274 640,258 720,262 780,262 830,255 900,228 950,222 1000,238 1110,245 1150,255 1250,248 1320,235 1390,225 1440,212', '0,178 30,190 70,170 122,135 150,145 190,150 240,135 290,125 330,95 380,85 420,85 445,100 490,155 520,170 580,148 680,150 730,170 790,190 840,200 900,200 1000,178 1060,195 1120,195 1180,200 1230,170 1280,170 1320,198 1350,202 1415,188'));

// RSI
draw('yellow', vol('282,430 318,405 335,430 352,465 375,452 408,487 430,475 462,482 485,470 520,478 535,445 555,437 575,412 600,408 625,397 655,377 690,372 712,370 735,438 770,403 785,415 802,390 820,407 845,382 890,355 915,380 933,367 967,440 1020,398 1040,432 1075,430 1092,457 1130,457 1165,435 1215,398 1245,398 1290,378 1360,352 1440,349', '0,318 50,318 65,330 85,330 100,375 122,397 138,378 195,378 225,350 260,332 320,322 355,330 375,365 390,410 415,370 435,375 462,430 500,415 520,378 545,372 565,350 630,337 640,358 680,362 715,340 732,370 755,370 765,405 822,468 850,440 880,440 895,420 945,400 965,475 985,472 1015,452 1035,472 1055,462 1090,490 1135,500 1185,497 1200,440 1250,450 1280,465 1320,500 1345,503 1380,470 1415,470'));
draw('dgreen', vol('282,445 318,436 352,460 375,455 408,475 462,470 520,468 535,457 575,435 600,420 625,427 655,408 715,405 735,430 770,415 820,408 890,375 915,375 933,375 967,425 1020,405 1040,422 1075,420 1092,435 1130,437 1165,430 1215,415 1290,400 1360,377 1440,361', '0,325 50,325 85,328 100,362 125,375 195,375 225,350 270,340 350,335 375,355 390,390 415,365 440,370 462,402 500,398 520,378 560,365 630,352 700,355 750,368 800,412 822,435 850,420 880,425 895,410 945,400 965,445 1020,438 1045,452 1085,450 1100,470 1135,473 1185,472 1200,437 1250,450 1280,458 1320,480 1345,480 1380,468 1415,468'));
draw('blue', vol('282,460 318,453 352,462 400,468 462,467 520,467 580,458 600,447 650,438 715,435 735,445 790,435 870,420 890,402 933,400 967,430 1020,415 1040,428 1092,430 1140,432 1200,425 1290,412 1350,400 1440,382', '0,350 40,340 85,338 100,360 125,370 195,368 225,355 300,345 355,343 375,355 390,378 415,368 440,368 462,387 500,383 520,373 560,363 630,358 700,355 750,367 800,392 840,405 880,405 945,397 965,420 1050,430 1100,445 1180,450 1200,437 1250,442 1320,457 1415,452'));

// KDJ
const kdj = (l, r) => at(0, 520, l) + ' ' + at(480, 350, r);
draw('dgreen', kdj('280,49 340,49 355,125 375,150 410,228 430,230 450,217 465,217 520,180 570,49 690,49 720,62 735,103 750,100 770,70 790,75 808,62 825,80 860,58 895,65 915,75 933,55 970,118 985,115 1020,58 1060,120 1080,122 1130,192 1150,185 1218,49 1440,50', '0,562 50,560 85,563 120,612 140,595 175,615 190,615 230,558 360,560 390,632 430,597 450,615 480,665 500,660 520,590 550,558 650,558 720,565 750,585 820,738 880,738 950,565 985,715 1030,695 1090,738 1165,735 1205,660 1265,612 1290,630 1345,738 1380,715 1415,685'));
draw('yellow', kdj('282,82 320,63 340,65 370,105 385,120 420,172 450,178 500,182 520,172 570,100 620,70 700,65 720,70 733,85 750,85 770,75 820,75 860,68 895,70 933,65 965,90 1000,90 1020,75 1050,95 1090,118 1145,150 1180,135 1220,80 1280,62 1330,55 1440,52', '0,565 85,565 120,585 190,597 230,568 280,562 360,562 400,590 430,598 460,615 500,628 520,605 580,572 650,565 720,570 760,595 820,680 875,695 915,680 950,625 980,680 1020,680 1060,700 1140,722 1180,718 1205,685 1265,652 1290,655 1345,705 1380,697 1415,690'));
draw('white', kdj('282,100 320,80 345,85 375,95 420,140 470,165 510,177 540,165 590,120 640,85 700,70 730,73 800,75 900,70 950,70 985,83 1020,80 1085,100 1140,130 1185,135 1240,100 1300,72 1380,56 1440,54', '0,565 85,565 130,577 190,590 230,575 360,565 400,578 500,615 550,590 620,570 720,570 770,585 830,650 880,680 950,655 985,670 1060,685 1150,718 1180,718 1265,668 1300,665 1350,693 1415,693'));

// MACD histogram
const histVals = [5, 5, 5, 4, 2, 2, 1, 1, 1, 1, -1, -1, -1, 0, 0, 1, 1, 1, 2, 3, 4, 4, 3, 3, 2, 1, 1, 1, 1, 1, 1, 1, 2, 6, 7, 7, 7, 5, 2,
    1, 1, 1, 1, 1, 0, -2, -3, -3, -3, -2, -1, 1, 1, 1, -1, 1, 1, 1, 2, 3, 4, 6, 8, 10, 12,
    12, 12, 13, 15, 15, 8, 3, 1, 1, -1, -1, -1, 0, 1, 6, 9, 10, 15, 14, 14, 11, 1, 1, 1, -3, -12, -14, -14, -7, -4, 3, 9, 13, 15, 17, 13, 12, 8, 11, 15, 11, 9,
    -1, -12, -22, -35, -35, -32, -30, -22, -16, -10, -3, -17, -24, -25, -23, -24, -27, -28, -27, -27, -30, -25, -20, -17, -1, 5, 10, 11, 11, 10, 2, -3, -4, -1, 1, 5, 7];
const hist = document.getElementById('hist');
histVals.forEach((v, i) => {
    const x = barX(i) + 2.5;
    add(hist, 'line', { x1: x, x2: x, y1: 654, y2: 654 - v, stroke: v < 0 ? '#00e000' : '#ff2020' });
});

draw('white', kdj('282,395 400,402 480,404 600,395 650,392 760,392 860,388 890,378 950,372 1090,380 1130,390 1220,390 1320,382 1380,370 1440,355', '0,865 85,835 130,852 190,858 250,852 300,825 355,810 380,825 440,835 500,870 540,855 620,808 680,805 720,790 755,795 820,880 880,915 945,897 970,930 1020,960 1080,985 1130,1025 1180,1028 1230,985 1290,972 1345,1000 1415,980'));
draw('fat', kdj('282,400 400,400 480,403 600,398 660,392 760,390 860,390 950,377 1090,378 1130,385 1220,387 1320,385 1440,372', '0,880 85,855 140,850 195,857 250,855 370,827 440,828 500,848 580,848 640,825 760,803 800,825 870,867 945,888 1000,917 1100,965 1175,1002 1210,1002 1270,990 1320,985 1350,990 1418,990'));

// intraday chart on the right
const mg = document.getElementById('mini-grid');
const stroke = '#c80000';
[437, 453, 469, 485, 501, 517, 548, 564, 580, 596, 612, 651, 671, 691].forEach(y =>
    add(mg, 'line', { x1: 1005, x2: 1233, y1: y + 0.5, y2: y + 0.5, stroke }));
[533, 630].forEach(y => add(mg, 'rect', { x: 1005, y: y - 1, width: 228, height: 3, fill: stroke }));
[1063, 1175].forEach(x => add(mg, 'line', { x1: x + 0.5, x2: x + 0.5, y1: 437, y2: 712, stroke }));
[1034, 1091, 1147, 1204].forEach(x => add(mg, 'line', { x1: x + 0.5, x2: x + 0.5, y1: 437, y2: 712, stroke, 'stroke-dasharray': '1 3' }));
add(mg, 'rect', { x: 1119, y: 437, width: 2, height: 275, fill: stroke });
add(mg, 'path', { d: 'M1005.500 437V712M1232.500 437V712M962 711.500H1233', fill: 'none', stroke });

const env = [[138, 480], [150, 448], [165, 480], [180, 450], [195, 490], [215, 495], [235, 510], [270, 500], [300, 525], [340, 530], [410, 518], [450, 530],
    [478, 540], [520, 500], [530, 535], [560, 535], [610, 510], [650, 515], [680, 515], [720, 520], [745, 520], [770, 500], [800, 470], [817, 450]];
const bars = document.getElementById('mini-bars');
function envelope(z) {
    for (let k = 1; k < env.length; k++) {
        if (z <= env[k][0]) {
            const t = (z - env[k - 1][0]) / (env[k][0] - env[k - 1][0]);
            return env[k - 1][1] + t * (env[k][1] - env[k - 1][1]);
        }
    }
    return env[env.length - 1][1];
}
for (let x = 1006; x < 1232; x++) {
    const z = (x - 960) * 3;
    const y = 520 + envelope(z) / 3 + (Math.sin(x * 1.7) + Math.sin(x * 0.6)) * 1.5;
    const cyan = Math.sin(x * 0.31) + Math.sin(x * 0.83) > 0.1;
    add(bars, 'rect', { x, y: y.toFixed(0), width: 1, height: (711 - y).toFixed(0), fill: cyan ? '#66ffff' : '#ffff99' });
}
add(bars, 'rect', { x: 1006, y: 630, width: 1, height: 81, fill: '#fff' });
add(bars, 'rect', { x: 1119, y: 682, width: 1, height: 29, fill: '#ffff99' });
add(bars, 'rect', { x: 1133, y: 685, width: 1, height: 26, fill: '#66ffff' });

const ml = document.getElementById('mini-lines');
add(ml, 'polyline', { class: 'ln ln-white', points: at(960, 520, '137,270 148,222 160,240 170,240 185,322 195,285 210,283 218,250 228,268 245,247 258,255 280,310 295,285 305,280 315,235 330,245 347,238 378,265 398,250 415,187 430,200 440,197 455,215 480,188 495,235 510,245 520,292 530,280 545,257 565,270 590,238 603,225 615,160 628,175 645,148 655,185 670,200 685,235 697,203 720,170 735,205 748,197 775,243 790,232 803,255 817,255') });
add(ml, 'polyline', { class: 'ln ln-pale', points: at(960, 520, '137,240 150,183 160,205 172,183 185,260 197,212 208,215 218,170 228,178 245,153 265,163 280,213 295,180 305,185 315,125 330,133 347,118 378,160 398,140 415,80 430,97 440,87 455,110 480,73 495,105 510,120 520,165 530,133 545,138 555,125 570,142 590,115 603,110 618,40 630,60 645,38 660,75 675,90 687,127 697,93 720,63 735,97 748,93 770,155 790,145 805,165 817,153') });
```
